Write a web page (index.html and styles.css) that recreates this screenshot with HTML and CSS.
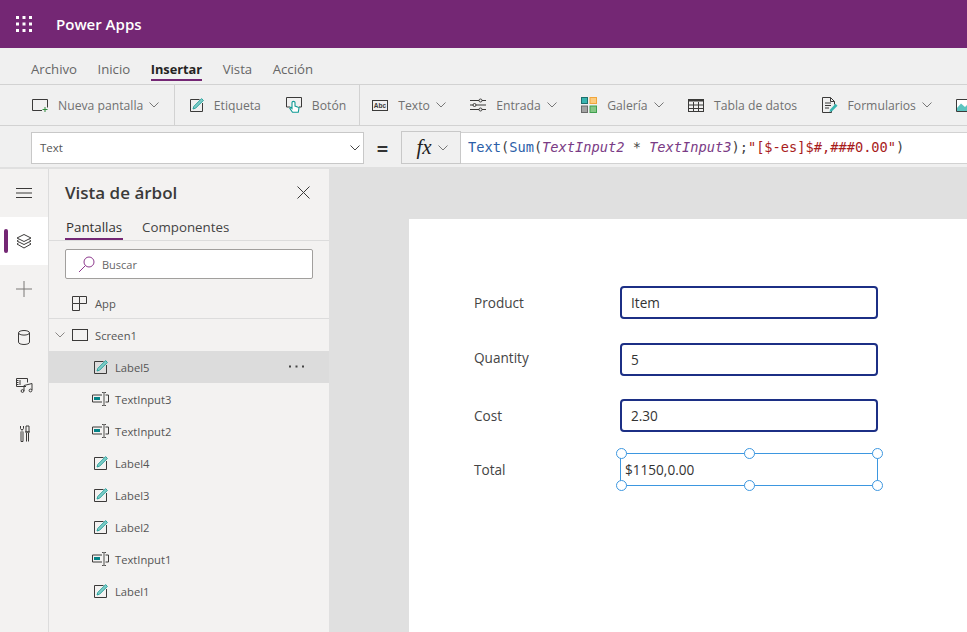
FILE: index.html
```html
<!DOCTYPE html>
<html lang="es">
<head>
<meta charset="utf-8">
<title>Power Apps</title>
<link rel="stylesheet" href="styles.css">
</head>
<body>
<svg class="defs" width="0" height="0" aria-hidden="true">
  <symbol id="chev" viewBox="0 0 10 6"><path d="M.5.5 5 5 9.5.5" fill="none" stroke="currentColor"/></symbol>
  <symbol id="label" viewBox="0 0 14 14">
    <path d="M9.5 1.5H.5v12h12V5" fill="none" stroke="#3b3a39"/>
    <path d="M11.6.6 13.4 2.4 5.6 10.2 3 11 3.8 8.4Z" fill="#7fcdc8" stroke="#1f9d97" stroke-width=".9"/>
  </symbol>
  <symbol id="tinput" viewBox="0 0 17 14">
    <path d="M10 3H.5v7H10M13.5 3H16.500v7H13.500" fill="none" stroke="#3b3a39"/>
    <path d="M2 5h6v3H2z" fill="#038387"/>
    <path d="M10 .5h1.500l.500.500.500-.500H14M12 1v12M10 13.500h1.500l.500-.500.500.500H14" fill="none" stroke="#3b3a39" stroke-width=".9"/>
  </symbol>
</svg>

<header class="appbar">
  <svg class="waffle" width="16" height="16" viewBox="0 0 16 16" fill="#fff"><path d="M0 0h3v3H0zM6.500 0h3v3h-3zM13 0h3v3h-3zM0 6.500h3v3H0zM6.500 6.500h3v3h-3zM13 6.500h3v3h-3zM0 13h3v3H0zM6.500 13h3v3h-3zM13 13h3v3h-3z"/></svg>
  <span class="appname">Power Apps</span>
</header>

<nav class="tabs">
  <span class="tab">Archivo</span>
  <span class="tab">Inicio</span>
  <span class="tab tab-active">Insertar</span>
  <span class="tab">Vista</span>
  <span class="tab">Acción</span>
</nav>

<div class="toolbar">
  <div class="tgroup tgroup-first">
    <span class="titem">
      <svg class="ticon" width="16" height="13" viewBox="0 0 16 13"><path d="M10 11.500H.5V.5h15v8" fill="none" stroke="#3b3a39"/><path d="M13 8v5M10.500 10.500h5" stroke="#2e8b3a" fill="none"/></svg>
      <span>Nueva pantalla</span><svg class="chev" width="10" height="6"><use href="#chev"/></svg>
    </span>
  </div>
  <div class="tgroup">
    <span class="titem">
      <svg class="ticon" width="14" height="14"><use href="#label"/></svg>
      <span>Etiqueta</span>
    </span>
    <span class="titem">
      <svg class="ticon" width="16" height="16" viewBox="0 0 16 16"><path d="M4 10H.5V.5h15V10H13" fill="none" stroke="#3b3a39"/><path d="M6 5.500v6L4.800 10.300 3.800 11.300 6.500 15.300H12.300L13 10.500 9 9V5.500C9 4 6 4 6 5.500Z" fill="#fff" stroke="#0f9a94" stroke-width="1.100"/></svg>
      <span>Botón</span>
    </span>
  </div>
  <div class="tgroup tgroup-last">
    <span class="titem">
      <svg class="ticon" width="16" height="11" viewBox="0 0 16 11"><rect x=".5" y=".5" width="15" height="10" fill="none" stroke="#3b3a39"/><text x="8" y="7.500" class="abc">Abc</text></svg>
      <span>Texto</span><svg class="chev" width="10" height="6"><use href="#chev"/></svg>
    </span>
    <span class="titem">
      <svg class="ticon" width="16" height="14" viewBox="0 0 16 14" fill="none" stroke="#3b3a39"><path d="M0 2.500h9M12 2.500h4M0 7h3M6 7h10M0 11.500h9M12 11.500h4"/><circle cx="10.500" cy="2.500" r="1.500"/><circle cx="4.500" cy="7" r="1.500"/><circle cx="10.500" cy="11.500" r="1.500"/></svg>
      <span>Entrada</span><svg class="chev" width="10" height="6"><use href="#chev"/></svg>
    </span>
    <span class="titem">
      <svg class="ticon" width="16" height="16" viewBox="0 0 16 16"><rect x=".5" y=".5" width="6" height="6" fill="#38b5b0" stroke="#1d6f6c"/><rect x="9" y=".5" width="6.500" height="6" fill="#fdcb7e" stroke="#f0a63c"/><rect x=".5" y="9" width="6" height="6.500" fill="#a3a3a3" stroke="#6a6a6a"/><rect x="9" y="9" width="6.500" height="6.500" fill="#85c785" stroke="#3f9f4f"/></svg>
      <span>Galería</span><svg class="chev" width="10" height="6"><use href="#chev"/></svg>
    </span>
    <span class="titem">
      <svg class="ticon" width="16" height="13" viewBox="0 0 16 13" fill="none" stroke="#3b3a39"><rect x=".5" y=".5" width="15" height="12"/><path d="M0 1.500h16" stroke-width="2"/><path d="M0 6h16M0 9.500h16M5.500 3v10M10.500 3v10"/></svg>
      <span>Tabla de datos</span>
    </span>
    <span class="titem">
      <svg class="ticon" width="16" height="16" viewBox="0 0 16 16"><path d="M9.500 13.500v2H.5V.5h8l4 4v3M8.500.5v4h4" fill="none" stroke="#3b3a39"/><path d="M3 6h6M3 8.500h6M3 11h4" stroke="#3b3a39" fill="none"/><path d="M13.500 6.800 15.500 8.800 10 14.300 7.500 15 8.200 12.400Z" fill="#38b5b0"/></svg>
      <span>Formularios</span><svg class="chev" width="10" height="6"><use href="#chev"/></svg>
    </span>
    <span class="titem">
      <svg class="ticon" width="16" height="13" viewBox="0 0 16 13"><path d="M.5.5h15v12H.5z" fill="#fff" stroke="#3b3a39"/><path d="M1 9 5 4.500 9 8 11.500 5.500 15 8.500V12H1z" fill="#5dc4c0"/></svg>
    </span>
  </div>
</div>

<div class="formulabar">
  <div class="propselect"><span>Text</span><svg class="chev chev-dark" width="10" height="6"><use href="#chev"/></svg></div>
  <span class="equals">=</span>
  <div class="fxbtn"><i class="fx">fx</i><svg class="chev" width="10" height="6"><use href="#chev"/></svg></div>
  <div class="formula"><span class="f-fn">Text</span>(<span class="f-fn">Sum</span>(<i class="f-var">TextInput2</i> * <i class="f-var">TextInput3</i>);<span class="f-str">"[$-es]$#,###0.00"</span>)</div>
</div>

<main class="workspace">
  <aside class="rail">
    <div class="railitem">
      <svg width="16" height="10" viewBox="0 0 16 10" fill="none" stroke="#3b3a39"><path d="M0 .5h16M0 5h16M0 9.500h16"/></svg>
    </div>
    <div class="railitem railitem-active">
      <svg width="16" height="15" viewBox="0 0 16 15" fill="none" stroke="#3b3a39"><path d="M8 .5 15 4 8 7.500 1 4Z"/><path d="M2.500 6 1 7 8 10.500 15 7 13.500 6"/><path d="M2.500 9 1 10 8 14 15 10 13.500 9"/></svg>
    </div>
    <div class="railitem">
      <svg width="16" height="16" viewBox="0 0 16 16" stroke="#7a7876" fill="none"><path d="M0 8h16M8 0v16"/></svg>
    </div>
    <div class="railitem">
      <svg width="12" height="15" viewBox="0 0 12 15" fill="none" stroke="#3b3a39"><ellipse cx="6" cy="2.800" rx="5.500" ry="2.300"/><path d="M.5 2.800v9.400c0 1.300 2.500 2.300 5.500 2.300s5.500-1 5.500-2.300V2.800"/></svg>
    </div>
    <div class="railitem">
      <svg width="17" height="16" viewBox="0 0 17 16" fill="none" stroke="#3b3a39"><path d="M10 9.500H.5V1.500h11v4M.5 3.500h2M.5 5.500h2M.5 7.500h2M4 3v5"/><path d="M8 14V8.500l8-2V13" /><circle cx="6.500" cy="14" r="1.400"/><circle cx="14.500" cy="13.500" r="1.400"/></svg>
    </div>
    <div class="railitem">
      <svg width="11" height="17" viewBox="0 0 11 17" fill="none" stroke="#3b3a39"><path d="M2 6.500V16.500h2V6.500M1.500 1v2.500c0 1.700 3 1.700 3 0V1M3 5.500v1"/><path d="M7.500 16.500V8M9.500 16.500V8M6 7h5M7 1h3v6H7z"/></svg>
    </div>
  </aside>

  <section class="tree">
    <div class="treehead">
      <h1 class="treetitle">Vista de árbol</h1>
      <svg width="13" height="13" viewBox="0 0 13 13" fill="none" stroke="#3b3a39"><path d="M.5.500l12 12M12.500.500l-12 12"/></svg>
    </div>
    <div class="treetabs">
      <span class="ttab ttab-active">Pantallas</span>
      <span class="ttab">Componentes</span>
    </div>
    <div class="search">
      <svg width="17" height="17" viewBox="0 0 17 17" fill="none" stroke="#8e3a8e"><circle cx="11" cy="6" r="5"/><path d="M7.500 9.500 1 16"/></svg>
      <span>Buscar</span>
    </div>
    <div class="row row-app">
      <svg class="ricon" width="15" height="15" viewBox="0 0 15 15" fill="none" stroke="#3b3a39"><path d="M.5 7.500h7v7h-7zM7.500.5h7v7h-7zM.5 7.500v-7h7"/></svg>
      <span>App</span>
    </div>
    <div class="row row-screen">
      <svg class="twist" width="10" height="6"><use href="#chev"/></svg>
      <svg class="ricon" width="16" height="12" viewBox="0 0 16 12" fill="none" stroke="#3b3a39"><rect x=".5" y=".5" width="15" height="11"/></svg>
      <span>Screen1</span>
    </div>
    <div class="row row-child row-selected">
      <svg class="cicon" width="14" height="14"><use href="#label"/></svg><span>Label5</span>
      <svg class="more" width="15" height="3" viewBox="0 0 15 3" fill="#444"><path d="M0 .5h2v2H0zM6.500 .5h2v2h-2zM13 .5h2v2h-2z"/></svg>
    </div>
    <div class="row row-child"><svg class="cicon cicon-input" width="17" height="14"><use href="#tinput"/></svg><span>TextInput3</span></div>
    <div class="row row-child"><svg class="cicon cicon-input" width="17" height="14"><use href="#tinput"/></svg><span>TextInput2</span></div>
    <div class="row row-child"><svg class="cicon" width="14" height="14"><use href="#label"/></svg><span>Label4</span></div>
    <div class="row row-child"><svg class="cicon" width="14" height="14"><use href="#label"/></svg><span>Label3</span></div>
    <div class="row row-child"><svg class="cicon" width="14" height="14"><use href="#label"/></svg><span>Label2</span></div>
    <div class="row row-child"><svg class="cicon cicon-input" width="17" height="14"><use href="#tinput"/></svg><span>TextInput1</span></div>
    <div class="row row-child"><svg class="cicon" width="14" height="14"><use href="#label"/></svg><span>Label1</span></div>
  </section>

  <section class="canvas">
    <div class="sheet">
      <span class="ctl-label lbl-1">Product</span>
      <div class="ctl-input in-1">Item</div>
      <span class="ctl-label lbl-2">Quantity</span>
      <div class="ctl-input in-2">5</div>
      <span class="ctl-label lbl-3">Cost</span>
      <div class="ctl-input in-3">2.30</div>
      <span class="ctl-label lbl-4">Total</span>
      <div class="ctl-selected">
        $1150,0.00
        <i class="h h-tl"></i><i class="h h-tc"></i><i class="h h-tr"></i>
        <i class="h h-bl"></i><i class="h h-bc"></i><i class="h h-br"></i>
      </div>
    </div>
  </section>
</main>
</body>
</html>
```
FILE: styles.css
```css
* { box-sizing: border-box; }
html, body { margin: 0; height: 100%; }
body {
  width: 967px;
  height: 632px;
  overflow: hidden;
  display: flex;
  flex-direction: column;
  font-family: "Open Sans", "Noto Sans", sans-serif;
  background: #f0f0f0;
  color: #323130;
}
.defs { position: absolute; }

.appbar {
  height: 48px;
  flex: none;
  background: #742774;
  display: flex;
  align-items: center;
  padding-left: 16px;
  color: #fff;
}
.appname { margin-left: 24px; font-size: 15px; font-weight: 600; }

.tabs {
  height: 37px;
  flex: none;
  display: flex;
  gap: 20.500px;
  padding-left: 31px;
  background: #f0f0f0;
  border-bottom: 1px solid #d2d2d2;
  font-size: 13.200px;
  color: #666;
}
.tab { height: 33px; padding-top: 11.500px; line-height: 18px; }
.tab-active {
  color: #252423;
  font-size: 12.800px;
  font-weight: 700;
  border-bottom: 2px solid #742774;
}

.toolbar {
  height: 41px;
  flex: none;
  display: flex;
  background: #f0f0f0;
  border-bottom: 1px solid #d2d2d2;
  font-size: 12.200px;
  color: #707070;
  overflow: hidden;
}
.tgroup {
  flex: none;
  display: flex;
  align-items: center;
  gap: 25px;
  padding: 0 13px 0 15px;
  border-right: 1px solid #d2d2d2;
}
.tgroup-first { padding-left: 32px; padding-right: 14.500px; }
.tgroup-last { border-right: 0; padding-left: 12px; gap: 24.400px; white-space: nowrap; }
.titem { display: flex; align-items: center; flex: none; }
.ticon { margin-right: 10px; flex: none; }
.chev { margin-left: 6px; color: #777; flex: none; }
.chev-dark { color: #444; }
.abc { font: 700 6.500px "Liberation Sans", sans-serif; text-anchor: middle; fill: #3b3a39; }

.formulabar {
  height: 43px;
  flex: none;
  display: flex;
  align-items: center;
  padding: 2px 0 0 31px;
  background: #f0f0f0;
  border-bottom: 2px solid #e0e0e0;
}
.propselect {
  width: 333px;
  height: 32px;
  display: flex;
  align-items: center;
  justify-content: space-between;
  padding: 0 3px 0 8px;
  background: #fff;
  border: 1px solid #c8c8c8;
  font-size: 11.500px;
  color: #555;
}
.equals {
  width: 37px;
  padding-top: 1px;
  text-align: center;
  font-size: 20px;
  font-weight: 700;
  color: #333;
}
.fxbtn {
  width: 60px;
  height: 33px;
  display: flex;
  align-items: center;
  justify-content: center;
  border: 1px solid #c8c8c8;
  background: #f0f0f0;
}
.fx { margin-left: 2px; font: italic 21px "Liberation Serif", serif; color: #222; }
.formula {
  flex: 1;
  height: 32px;
  min-width: 0;
  padding-left: 7px;
  background: #fff;
  border-top: 1px solid #d2d2d2;
  border-bottom: 1px solid #d2d2d2;
  font: 13.680px/29px "DejaVu Sans Mono", monospace;
  color: #444;
  white-space: pre;
  overflow: hidden;
}
.f-fn { color: #2b5ea8; }
.f-var { color: #7a3b85; }
.f-str { color: #a81c1c; }

.workspace { flex: 1; min-height: 0; display: flex; }

.rail {
  width: 49px;
  flex: none;
  background: #f3f2f1;
  border-right: 1px solid #dcdcdc;
}
.railitem {
  height: 48px;
  display: flex;
  align-items: center;
  justify-content: center;
  position: relative;
}
.railitem-active { background: #fff; }
.railitem-active::before {
  content: "";
  position: absolute;
  left: 4px;
  top: 12px;
  width: 4px;
  height: 24px;
  border-radius: 2px;
  background: #742774;
}

.tree {
  width: 280px;
  flex: none;
  background: #f3f2f1;
  font-size: 11.200px;
  color: #555;
}
.treehead {
  height: 49px;
  display: flex;
  align-items: center;
  justify-content: space-between;
  padding: 0 19px 2px 16px;
}
.treetitle { margin: 0; font-size: 17px; font-weight: 600; color: #3b3a39; }
.treetabs {
  height: 23px;
  display: flex;
  gap: 19px;
  padding-left: 16px;
  border-bottom: 1px solid #dcdcdc;
  font-size: 13.300px;
  color: #444;
}
.ttab { height: 22px; line-height: 18px; }
.ttab-active { color: #323130; padding: 0 1px; border-bottom: 2px solid #742774; }
.search {
  height: 30px;
  margin: 8px 16px 9px;
  display: flex;
  align-items: center;
  padding-left: 12px;
  gap: 7px;
  background: #fff;
  border: 1px solid #a19f9d;
  border-radius: 2px;
  font-size: 11px;
  color: #666;
}
.row { height: 32px; display: flex; align-items: center; }
.row-app { height: 31px; padding-left: 23px; border-bottom: 1px solid #dcdcdc; }
.row-screen { padding-left: 6px; }
.twist { color: #8a8886; margin-right: 7px; }
.ricon { margin-right: 7px; flex: none; }
.row-app .ricon { margin-right: 8px; }
.row-child { padding-left: 45px; position: relative; }
.cicon { margin-right: 7px; flex: none; width: 14px; }
.cicon-input { width: 17px; margin-left: -2px; margin-right: 6px; }
.row-selected { background: #dcdcdc; }
.more { position: absolute; right: 25px; top: 14px; }

.canvas { flex: 1; min-width: 0; background: #e0e0e0; padding: 50px 0 0 80px; }
.sheet { background: #fff; height: 100%; position: relative; font-size: 13.600px; }
.ctl-label { position: absolute; left: 65px; color: #444; line-height: 18px; }
.lbl-1 { top: 75px; }
.lbl-2 { top: 130px; }
.lbl-3 { top: 188px; }
.lbl-4 { top: 242px; }
.ctl-input {
  position: absolute;
  left: 211px;
  width: 258px;
  height: 33px;
  padding-left: 9px;
  border: 2px solid #1c2f85;
  border-radius: 4px;
  line-height: 29px;
  color: #333;
}
.in-1 { top: 67px; }
.in-2 { top: 124px; }
.in-3 { top: 180px; }
.ctl-selected {
  position: absolute;
  left: 211px;
  top: 234px;
  width: 258px;
  height: 33px;
  padding-left: 4px;
  border: 1px solid #3d97e0;
  line-height: 31px;
  color: #333;
}
.h {
  position: absolute;
  width: 11px;
  height: 11px;
  border-radius: 50%;
  background: #fff;
  border: 1.500px solid #3d97e0;
}
.h-tl { left: -5.500px; top: -6.500px; }
.h-tc { left: 122.500px; top: -6.500px; }
.h-tr { right: -5.500px; top: -6.500px; }
.h-bl { left: -5.500px; bottom: -5.500px; }
.h-bc { left: 122.500px; bottom: -5.500px; }
.h-br { right: -5.500px; bottom: -5.500px; }
```
